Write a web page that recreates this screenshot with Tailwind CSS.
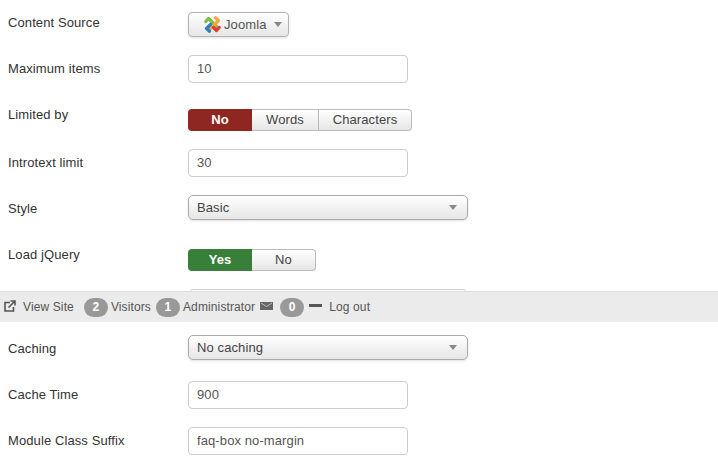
<!DOCTYPE html>
<html lang="en">
<head>
    <meta charset="UTF-8">
    <title>Module settings</title>
    <script src="https://cdn.jsdelivr.net/npm/@tailwindcss/browser@4"></script>
</head>
<body class="bg-white font-['Liberation_Sans',Arial,sans-serif] text-[13px] tracking-[0.1px] text-[#333] relative h-[471px] overflow-hidden">
    <main class="pl-2 pt-3 flex flex-col">
        <!-- Content Source -->
        <div class="flex h-[43px]">
            <label class="w-[180px] pt-[2px] leading-[18px]">Content Source</label>
            <button class="h-[25px] w-[101px] flex items-center pl-[15px] rounded border border-[#b3b3b3] bg-gradient-to-b from-white to-[#e6e6e6] shadow-sm text-[#555]">
                <svg class="w-[17px] h-[17px] mr-[3px] shrink-0" viewBox="0 0 17 17" fill="none" stroke-width="3.200" stroke-linecap="round" stroke-linejoin="round">
                    <path d="M1.800 5.500L4.500 2.500L13 11" stroke="#7ac143"/>
                    <path d="M11.500 1.800L14.500 4.500L6 13" stroke="#f9a541"/>
                    <path d="M15.200 11.500L12.500 14.500L9.500 11.500" stroke="#e8392b"/>
                    <path d="M5.500 15.200L2.500 12.500L6.500 8.500" stroke="#2f7fc8"/>
                </svg>
                Joomla
                <span class="ml-[7px] w-0 h-0 border-x-[4px] border-x-transparent border-t-[5px] border-t-[#888]"></span>
            </button>
        </div>

        <!-- Maximum items -->
        <div class="flex h-[54px]">
            <label class="w-[180px] pt-[5px] leading-[18px]">Maximum items</label>
            <div class="h-[28px] w-[220px] flex items-center px-[8px] rounded border border-[#ccc] text-[#555]">10</div>
        </div>

        <!-- Limited by -->
        <div class="flex h-[40px]">
            <label class="w-[180px] leading-[12px]">Limited by</label>
            <div class="flex h-[22px]">
                <span class="w-[64px] flex items-center justify-center rounded-l bg-[#8e2622] text-white font-bold tracking-normal">No</span>
                <span class="w-[67px] flex items-center justify-center border border-l-0 border-[#bbb] bg-gradient-to-b from-white to-[#e6e6e6] text-[#444]">Words</span>
                <span class="w-[93px] flex items-center justify-center rounded-r border border-l-0 border-[#bbb] bg-gradient-to-b from-white to-[#e6e6e6] text-[#444]">Characters</span>
            </div>
        </div>

        <!-- Introtext limit -->
        <div class="flex h-[46px]">
            <label class="w-[180px] pt-[5px] leading-[18px]">Introtext limit</label>
            <div class="h-[28px] w-[220px] flex items-center px-[8px] rounded border border-[#ccc] text-[#555]">30</div>
        </div>

        <!-- Style -->
        <div class="flex h-[54px]">
            <label class="w-[180px] pt-[5px] leading-[18px]">Style</label>
            <div class="h-[25px] w-[280px] flex items-center justify-between pl-[8px] pr-[10px] rounded-[5px] border border-[#aaa] bg-gradient-to-b from-white to-[#e6e6e6] shadow-sm text-[#444]">
                Basic
                <span class="w-0 h-0 border-x-[4px] border-x-transparent border-t-[5px] border-t-[#888]"></span>
            </div>
        </div>

        <!-- Load jQuery -->
        <div class="flex h-[40px]">
            <label class="w-[180px] leading-[12px]">Load jQuery</label>
            <div class="flex h-[22px]">
                <span class="w-[64px] flex items-center justify-center rounded-l bg-[#38803a] text-white font-bold tracking-normal">Yes</span>
                <span class="w-[64px] flex items-center justify-center rounded-r border border-l-0 border-[#bbb] bg-gradient-to-b from-white to-[#e6e6e6] text-[#444]">No</span>
            </div>
        </div>

        <!-- hidden under the status bar -->
        <div class="flex h-[46px]">
            <div class="ml-[180px] h-[25px] w-[280px] rounded-[5px] border border-[#ccc]"></div>
        </div>

        <!-- Caching -->
        <div class="flex h-[46px]">
            <label class="w-[180px] pt-[5px] leading-[18px]">Caching</label>
            <div class="h-[25px] w-[280px] flex items-center justify-between pl-[8px] pr-[10px] rounded-[5px] border border-[#aaa] bg-gradient-to-b from-white to-[#e6e6e6] shadow-sm text-[#444]">
                No caching
                <span class="w-0 h-0 border-x-[4px] border-x-transparent border-t-[5px] border-t-[#888]"></span>
            </div>
        </div>

        <!-- Cache Time -->
        <div class="flex h-[46px]">
            <label class="w-[180px] pt-[5px] leading-[18px]">Cache Time</label>
            <div class="h-[28px] w-[220px] flex items-center px-[8px] rounded border border-[#ccc] text-[#555]">900</div>
        </div>

        <!-- Module Class Suffix -->
        <div class="flex h-[46px]">
            <label class="w-[180px] pt-[5px] leading-[18px]">Module Class Suffix</label>
            <div class="h-[28px] w-[220px] flex items-center px-[8px] rounded border border-[#ccc] text-[#555]">faq-box no-margin</div>
        </div>
    </main>

    <!-- Status bar, fixed over the form -->
    <div class="absolute left-0 right-0 top-[291px] h-[31px] bg-[#ebebeb] border-t border-[#ddd] flex items-center text-[12px] tracking-[0.12px] text-[#555]">
        <svg class="ml-[4px] w-[12px] h-[12px] -mt-[3px]" viewBox="0 0 12 12" fill="none" stroke="#555" stroke-width="1.6">
            <path d="M6 2.500H1V11H9.500V7"/>
            <path d="M4.500 7.500L10 2M6.500 1H11V5.500" />
        </svg>
        <span class="ml-[7px]">View Site</span>
        <span class="ml-[10px] w-[24px] h-[19px] rounded-full bg-[#999] text-white font-bold flex items-center justify-center">2</span>
        <span class="ml-[3px]">Visitors</span>
        <span class="ml-[5px] w-[24px] h-[19px] rounded-full bg-[#999] text-white font-bold flex items-center justify-center">1</span>
        <span class="ml-[3px]">Administrator</span>
        <svg class="ml-[5px] w-[13px] h-[8px] -mt-[2px]" viewBox="0 0 13 8">
            <rect width="13" height="8" fill="#666"/>
            <path d="M1 1L6.500 4.500L12 1" fill="none" stroke="#bbb" stroke-width="1"/>
        </svg>
        <span class="ml-[7px] w-[24px] h-[19px] rounded-full bg-[#999] text-white font-bold flex items-center justify-center">0</span>
        <span class="ml-[5px] w-[13px] h-[3px] bg-[#555] -mt-[3px]"></span>
        <span class="ml-[7px]">Log out</span>
    </div>
</body>
</html>
